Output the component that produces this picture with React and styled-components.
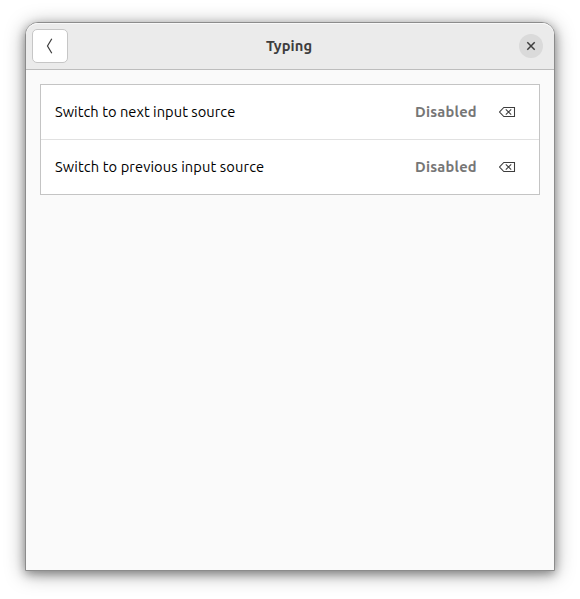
import React from "react";
import styled, { createGlobalStyle } from "styled-components";

const GlobalStyle = createGlobalStyle`
  *, *::before, *::after { box-sizing: border-box; }
  body { margin: 0; background: #fff; overflow: hidden; }
  button { padding: 0; font: inherit; color: inherit; }
`;

const Desktop = styled.main`
  height: 599px;
  padding: 22px 25px 28px;
  font-family: Ubuntu, "Noto Sans", sans-serif;
  font-size: 14.67px;
  line-height: 20px;
`;

const Window = styled.section`
  height: 549px;
  display: flex;
  flex-direction: column;
  border: 1px solid #8c8c8c;
  border-radius: 13px 13px 0 0;
  background: #fafafa;
  box-shadow: 0 3px 10px rgba(0, 0, 0, 0.32), 0 3px 20px rgba(0, 0, 0, 0.36);
`;

const HeaderBar = styled.header`
  height: 47px;
  flex: none;
  display: grid;
  grid-template-columns: 36px 1fr 36px;
  align-items: center;
  padding: 0 5px 1px 6px;
  border-bottom: 1px solid #bdbdbd;
  border-radius: 12px 12px 0 0;
  background: #ebebeb;
  box-shadow: inset 0 1px #f8f8f8;
`;

const BackButton = styled.button`
  width: 36px;
  height: 34px;
  display: grid;
  place-items: center;
  border: 1px solid #c6c6c6;
  border-radius: 5px;
  background: #fff;
  color: #3d3d3d;
`;

const CloseButton = styled.button`
  width: 24px;
  height: 24px;
  display: grid;
  place-items: center;
  justify-self: center;
  border: 0;
  border-radius: 50%;
  background: #dadada;
  color: #3d3d3d;
`;

const Title = styled.h1`
  margin: 0;
  padding-right: 3px;
  text-align: center;
  font-size: 14.67px;
  line-height: 20px;
  font-weight: 700;
  letter-spacing: 0.08px;
  color: #3d3d3d;
`;

const ShortcutList = styled.ul`
  list-style: none;
  margin: 14px;
  padding: 0;
  border: 1px solid #c4c4c4;
  background: #fff;
`;

const ShortcutRow = styled.li`
  height: 54px;
  display: flex;
  align-items: center;
  padding: 0 23px 0 14px;
  & + & {
    height: 55px;
    border-top: 1px solid #e1e1e1;
  }
`;

const Label = styled.span`
  flex: 1;
  white-space: nowrap;
  letter-spacing: ${(p) => p.$tracking};
  color: #000;
`;

const Status = styled.span`
  width: 62px;
  margin-right: 22px;
  white-space: nowrap;
  font-weight: 700;
  letter-spacing: 0.22px;
  color: #767676;
`;

const ResetButton = styled.button`
  width: 17px;
  height: 12px;
  display: flex;
  border: 0;
  background: transparent;
  color: #3d3d3d;
`;

const Glyph = styled.svg`
  display: block;
  fill: none;
  stroke: currentColor;
`;

const shortcuts = [
  { label: "Switch to next input source", status: "Disabled", tracking: "0.04px" },
  { label: "Switch to previous input source", status: "Disabled", tracking: "0.11px" },
];

export default function App() {
  return (
    <Desktop>
      <GlobalStyle />
      <Window>
        <HeaderBar>
          <BackButton aria-label="Back">
            <Glyph width="16" height="16" viewBox="0 0 16 16" strokeWidth="1.2">
              <path d="M9.8 .7 5.5 8l4.3 7.3" />
            </Glyph>
          </BackButton>
          <Title>Typing</Title>
          <CloseButton aria-label="Close">
            <Glyph width="16" height="16" viewBox="0 0 16 16" strokeWidth="1.5">
              <path d="m4.3 4.3 7.4 7.4m0-7.4-7.4 7.4" />
            </Glyph>
          </CloseButton>
        </HeaderBar>
        <ShortcutList>
          {shortcuts.map((item) => (
            <ShortcutRow key={item.label}>
              <Label $tracking={item.tracking}>{item.label}</Label>
              <Status>{item.status}</Status>
              <ResetButton aria-label="Reset shortcut">
                <Glyph width="17" height="12" viewBox="0 0 17 12" strokeWidth="1.05">
                  <path d="M4.8 1.5h10.7v9H4.8L.6 6z" />
                  <path d="m6.8 3.3 5.4 5.4m0-5.4L6.8 8.7" />
                </Glyph>
              </ResetButton>
            </ShortcutRow>
          ))}
        </ShortcutList>
      </Window>
    </Desktop>
  );
}
